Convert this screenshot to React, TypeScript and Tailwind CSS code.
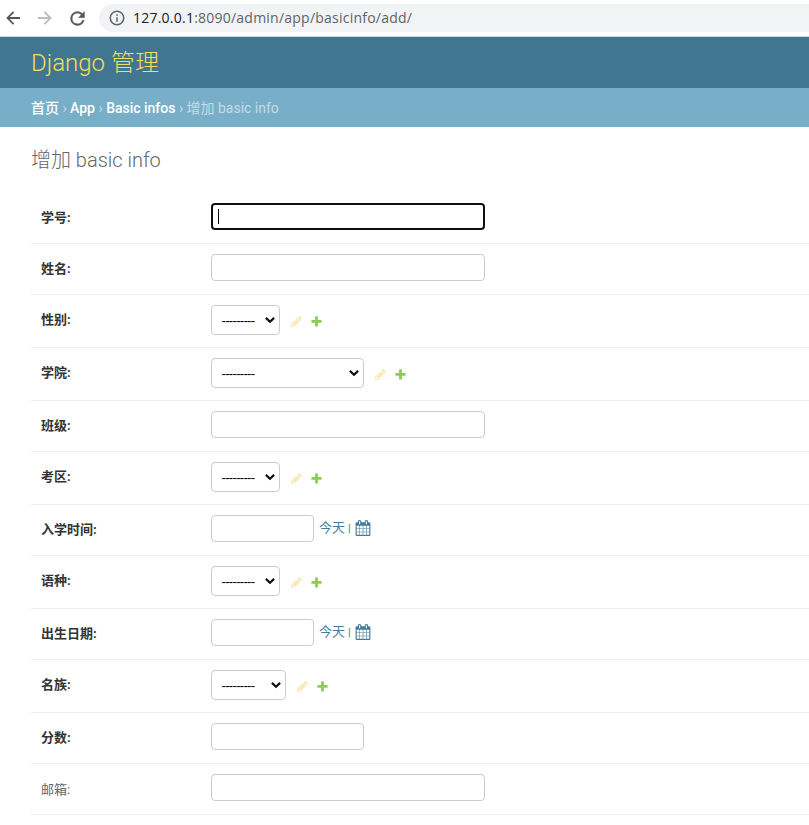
import React from 'react';

type Field = {
  label: string;
  kind: 'text' | 'select' | 'date';
  width: string;
  focused?: boolean;
  optional?: boolean;
};

const fields: Field[] = [
  { label: '学号:', kind: 'text', width: 'w-[274px]', focused: true },
  { label: '姓名:', kind: 'text', width: 'w-[274px]' },
  { label: '性别:', kind: 'select', width: 'w-[69px]' },
  { label: '学院:', kind: 'select', width: 'w-[153px]' },
  { label: '班级:', kind: 'text', width: 'w-[274px]' },
  { label: '考区:', kind: 'select', width: 'w-[69px]' },
  { label: '入学时间:', kind: 'date', width: 'w-[103px]' },
  { label: '语种:', kind: 'select', width: 'w-[69px]' },
  { label: '出生日期:', kind: 'date', width: 'w-[103px]' },
  { label: '名族:', kind: 'select', width: 'w-[75px]' },
  { label: '分数:', kind: 'text', width: 'w-[153px]' },
  { label: '邮箱:', kind: 'text', width: 'w-[274px]', optional: true },
];

function PencilIcon() {
  return (
    <svg className="h-[13px] w-[13px] opacity-30" viewBox="0 0 1792 1792" fill="#efb80b">
      <path d="M491 1536l91-91-235-235-91 91v107h128v128h107zm523-928q0-22-22-22-10 0-17 7l-542 542q-7 7-7 17 0 22 22 22 10 0 17-7l542-542q7-7 7-17zm-54-192l416 416-832 832h-416v-416zm683 96q0 53-37 90l-166 166-416-416 166-165q36-38 90-38 53 0 91 38l235 234q37 39 37 91z" />
    </svg>
  );
}

function PlusIcon() {
  return (
    <svg className="h-[13px] w-[13px] opacity-80" viewBox="0 0 1792 1792" fill="#70bf2b">
      <path d="M1600 796v192q0 40-28 68t-68 28h-416v416q0 40-28 68t-68 28h-192q-40 0-68-28t-28-68v-416h-416q-40 0-68-28t-28-68v-192q0-40 28-68t68-28h416v-416q0-40 28-68t68-28h192q40 0 68 28t28 68v416h416q40 0 68 28t28 68z" />
    </svg>
  );
}

function CalendarIcon() {
  return (
    <svg className="h-4 w-4" viewBox="0 0 1792 1792" fill="#447e9b">
      <path d="M192 1664h288v-288h-288v288zm352 0h320v-288h-320v288zm-352-352h288v-320h-288v320zm352 0h320v-320h-320v320zm-352-384h288v-288h-288v288zm736 736h320v-288h-320v288zm-384-736h320v-288h-320v288zm768 736h288v-288h-288v288zm-384-352h320v-320h-320v320zm-352-864v-288q0-13-9.5-22.5t-22.5-9.5h-64q-13 0-22.5 9.5t-9.5 22.5v288q0 13 9.5 22.5t22.5 9.5h64q13 0 22.5-9.5t9.5-22.5zm736 864h288v-320h-288v320zm-384-384h320v-288h-320v288zm384 0h288v-288h-288v288zm32-480v-288q0-13-9.5-22.5t-22.5-9.5h-64q-13 0-22.5 9.5t-9.5 22.5v288q0 13 9.5 22.5t22.5 9.5h64q13 0 22.5-9.5t9.5-22.5zm384-64v1280q0 52-38 90t-90 38h-1408q-52 0-90-38t-38-90v-1280q0-52 38-90t90-38h128v-96q0-66 47-113t113-47h64q66 0 113 47t47 113v96h384v-96q0-66 47-113t113-47h64q66 0 113 47t47 113v96h128q52 0 90 38t38 90z" />
    </svg>
  );
}

function BrowserBar() {
  return (
    <div className="flex h-[37px] items-start border-b border-[#d5d7da] bg-white pt-1">
      <div className="flex h-7 w-[99px] shrink-0 items-center gap-3 pl-[3px]">
        <svg className="h-5 w-5" viewBox="0 0 24 24" fill="#54575b">
          <path d="M20.5 10.8H8.1l5.4-5.4L12 3.9 3.9 12l8.1 8.1 1.5-1.5-5.4-5.4h12.4z" />
        </svg>
        <svg className="h-5 w-5" viewBox="0 0 24 24" fill="#babcbe">
          <path d="M12 3.9l-1.5 1.5 5.4 5.4H3.5v2.4h12.4l-5.4 5.4 1.5 1.5 8.1-8.1z" />
        </svg>
        <svg className="h-[21px] w-[21px]" viewBox="0 0 24 24" fill="#54575b" stroke="#54575b" strokeWidth="0.4">
          <path d="M17.65 6.35A7.96 7.96 0 0 0 12 4a8 8 0 1 0 7.73 10h-2.08A6 6 0 1 1 12 6c1.66 0 3.14.69 4.22 1.78L13 11h7V4l-2.35 2.35z" />
        </svg>
      </div>
      <div className="flex h-7 flex-1 items-center rounded-l-full bg-[#f1f3f4] pl-[9px]">
        <svg className="h-[18px] w-[18px]" viewBox="0 0 24 24" fill="#5f6368">
          <path d="M11 7h2v2h-2zm0 4h2v6h-2zm1-9a10 10 0 1 0 0 20 10 10 0 0 0 0-20zm0 18a8 8 0 1 1 0-16 8 8 0 0 1 0 16z" />
        </svg>
        <span className="ml-[7px] font-['Open_Sans','Noto_Sans',sans-serif] text-[14px] leading-7 tracking-[0.23px] text-[#5f6368]">
          <span className="text-[#202124]">127.0.0.1</span>:8090/admin/app/basicinfo/add/
        </span>
      </div>
    </div>
  );
}

function Control({ field }: { field: Field }) {
  if (field.kind === 'select') {
    return (
      <div className="flex items-center">
        <div className={`flex h-[30px] items-center justify-between rounded border border-[#ccc] pr-1 pl-[9.5px] ${field.width}`}>
          <span className="inline-block w-[33px] pt-[2px] font-['Liberation_Sans',Arial,sans-serif] text-[13px] leading-4 tracking-[-0.67px] whitespace-nowrap text-black">
            ---------
          </span>
          <svg className="h-[10px] w-[10px]" viewBox="0 0 10 10" fill="none" stroke="#101010" strokeWidth="2.2">
            <path d="M0.9 2.9L5 6.8L9.1 2.9" />
          </svg>
        </div>
        <div className="mt-[3px] ml-[10px] flex gap-[7px]">
          <PencilIcon />
          <PlusIcon />
        </div>
      </div>
    );
  }
  if (field.kind === 'date') {
    return (
      <div className="flex">
        <input className={`h-[27px] rounded border border-[#ccc] px-[6px] outline-none ${field.width}`} />
        <div className="ml-[5px] flex h-[26px] items-center text-[#447e9b]">
          <span className="text-[13px] leading-5">今天</span>
          <span className="ml-[3px] w-[3px] pt-px text-[11px] leading-5">|</span>
          <span className="ml-1">
            <CalendarIcon />
          </span>
        </div>
      </div>
    );
  }
  if (field.focused) {
    return (
      <div className={`flex h-[27px] items-center rounded border-2 border-[#101010] pl-[5px] ${field.width}`}>
        <span className="h-[15px] w-px bg-black" />
      </div>
    );
  }
  return <input className={`h-[27px] rounded border border-[#ccc] px-[6px] outline-none ${field.width}`} />;
}

export default function App() {
  return (
    <div className="h-[825px] w-full overflow-hidden bg-white font-['Roboto','Noto_Sans_CJK_SC',sans-serif]">
      <BrowserBar />
      <header className="flex h-[51px] items-center bg-[#417690] pl-[31px]">
        <h1 className="text-[24px] leading-6 font-light text-[#f5dd5d]">Django 管理</h1>
      </header>
      <nav className="flex h-[39px] items-center bg-[#79aec8] pl-[31px] text-[14px] leading-4 tracking-[-0.01px] whitespace-pre text-[#c4dce8]">
        <a className="font-medium text-white">首页</a> › <a className="font-medium text-white">App</a> ›{' '}
        <a className="font-medium text-white">Basic infos</a> › 增加 basic info
      </nav>
      <main className="pl-[31px]">
        <h2 className="flex h-[66px] items-center text-[20px] leading-5 font-light text-[#666]">增加 basic info</h2>
        <form>
          {fields.map((field) => (
            <div
              key={field.label}
              className={`flex items-start border-b border-[#eee] pt-[10px] pl-[10px] ${field.kind === 'select' ? 'h-[53px]' : 'h-[51px]'}`}
            >
              <label
                className={`flex w-[170px] shrink-0 items-center text-[13px] leading-[15px] ${field.optional ? 'h-[30px] font-normal text-[#666]' : 'h-[29px] font-bold text-[#333]'}`}
              >
                {field.label}
              </label>
              <Control field={field} />
            </div>
          ))}
        </form>
      </main>
    </div>
  );
}
